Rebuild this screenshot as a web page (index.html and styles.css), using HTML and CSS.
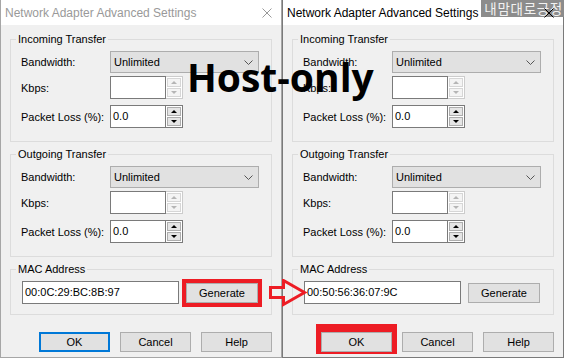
FILE: index.html
```html
<!DOCTYPE html>
<html>
<head>
<meta charset="utf-8">
<link rel="stylesheet" href="styles.css">
</head>
<body>
<div class="screen">
  <div class="dialog inactive">
    <div class="titlebar">
      <span class="title">Network Adapter Advanced Settings</span>
      <svg class="close" width="10" height="10" viewBox="0 0 10 10"><path d="M0.5 0.5L9.5 9.5M9.5 0.5L0.5 9.5"/></svg>
    </div>
    <div class="body">
      <fieldset class="group">
        <legend>Incoming Transfer</legend>
        <div class="rows">
          <span class="lbl">Bandwidth:</span>
          <div class="combo"><span>Unlimited</span><svg width="9" height="5" viewBox="0 0 9 5"><path d="M0.5 0.5L4.5 4.5L8.5 0.5"/></svg></div>
          <span class="lbl">Kbps:</span>
          <div class="spin disabled"><div class="field"></div><div class="btns"><div class="sb"><i class="up"></i></div><div class="sb"><i class="down"></i></div></div></div>
          <span class="lbl">Packet Loss (%):</span>
          <div class="spin"><div class="field">0.0</div><div class="btns"><div class="sb"><i class="up"></i></div><div class="sb"><i class="down"></i></div></div></div>
        </div>
      </fieldset>
      <fieldset class="group">
        <legend>Outgoing Transfer</legend>
        <div class="rows">
          <span class="lbl">Bandwidth:</span>
          <div class="combo"><span>Unlimited</span><svg width="9" height="5" viewBox="0 0 9 5"><path d="M0.5 0.5L4.5 4.5L8.5 0.5"/></svg></div>
          <span class="lbl">Kbps:</span>
          <div class="spin disabled"><div class="field"></div><div class="btns"><div class="sb"><i class="up"></i></div><div class="sb"><i class="down"></i></div></div></div>
          <span class="lbl">Packet Loss (%):</span>
          <div class="spin"><div class="field">0.0</div><div class="btns"><div class="sb"><i class="up"></i></div><div class="sb"><i class="down"></i></div></div></div>
        </div>
      </fieldset>
      <fieldset class="group mac">
        <legend>MAC Address</legend>
        <div class="macrow">
          <div class="macfield">00:0C:29:BC:8B:97</div>
          <div class="btn gen hl">Generate</div>
        </div>
      </fieldset>
      <div class="buttons">
        <div class="btn default">OK</div>
        <div class="btn">Cancel</div>
        <div class="btn">Help</div>
      </div>
    </div>
  </div>
  <div class="dialog active">
    <div class="titlebar">
      <span class="title">Network Adapter Advanced Settings</span>
      <svg class="close" width="10" height="10" viewBox="0 0 10 10"><path d="M0.5 0.5L9.5 9.5M9.5 0.5L0.5 9.5"/></svg>
    </div>
    <div class="body">
      <fieldset class="group">
        <legend>Incoming Transfer</legend>
        <div class="rows">
          <span class="lbl">Bandwidth:</span>
          <div class="combo"><span>Unlimited</span><svg width="9" height="5" viewBox="0 0 9 5"><path d="M0.5 0.5L4.5 4.5L8.5 0.5"/></svg></div>
          <span class="lbl">Kbps:</span>
          <div class="spin disabled"><div class="field"></div><div class="btns"><div class="sb"><i class="up"></i></div><div class="sb"><i class="down"></i></div></div></div>
          <span class="lbl">Packet Loss (%):</span>
          <div class="spin"><div class="field">0.0</div><div class="btns"><div class="sb"><i class="up"></i></div><div class="sb"><i class="down"></i></div></div></div>
        </div>
      </fieldset>
      <fieldset class="group">
        <legend>Outgoing Transfer</legend>
        <div class="rows">
          <span class="lbl">Bandwidth:</span>
          <div class="combo"><span>Unlimited</span><svg width="9" height="5" viewBox="0 0 9 5"><path d="M0.5 0.5L4.5 4.5L8.5 0.5"/></svg></div>
          <span class="lbl">Kbps:</span>
          <div class="spin disabled"><div class="field"></div><div class="btns"><div class="sb"><i class="up"></i></div><div class="sb"><i class="down"></i></div></div></div>
          <span class="lbl">Packet Loss (%):</span>
          <div class="spin"><div class="field">0.0</div><div class="btns"><div class="sb"><i class="up"></i></div><div class="sb"><i class="down"></i></div></div></div>
        </div>
      </fieldset>
      <fieldset class="group mac">
        <legend>MAC Address</legend>
        <div class="macrow">
          <div class="macfield">00:50:56:36:07:9C</div>
          <div class="btn gen">Generate</div>
        </div>
      </fieldset>
      <div class="buttons">
        <div class="btn ok-hl">OK</div>
        <div class="btn">Cancel</div>
        <div class="btn">Help</div>
      </div>
    </div>
  </div>

  <div class="caption">Host-only</div>
  <div class="blogtag">내맘대로긍정</div>
  <svg class="arrow" width="40" height="30" viewBox="0 0 40 30">
    <path d="M1.5 8.5H14.5V1.5L35.5 13.5L14.5 25.5V18.5H1.5Z"/>
  </svg>
</div>
</body>
</html>
```
FILE: styles.css
```css
* { box-sizing: border-box; }
html, body { margin: 0; padding: 0; }
body {
  background: #f0f0f0;
  font-family: "Liberation Sans", Arial, sans-serif;
  font-size: 11px;
  color: #000;
}
.screen {
  position: relative;
  display: flex;
  width: 564px;
  height: 358px;
  overflow: hidden;
}
.dialog {
  width: 282px;
  height: 358px;
  display: flex;
  flex-direction: column;
  background: #f0f0f0;
  border: 1px solid #a6a6a6;
  border-top: none;
}
.dialog.active { border-color: #7a7a7a; }
.titlebar {
  height: 25px;
  flex: none;
  background: #fff;
  display: flex;
  align-items: center;
  justify-content: space-between;
  padding: 0 9px 0 4px;
}
.title { font-size: 12px; line-height: 16px; padding-top: 1px; }
.inactive .title { color: #999; }
.close { position: relative; z-index: 3; fill: none; stroke-width: 1; }
.inactive .close { stroke: #999; }
.active .close { stroke: #000; }
.body {
  flex: 1;
  display: flex;
  flex-direction: column;
  padding: 6px 8px 0 9px;
}
.group {
  margin: 0 0 4px 0;
  width: 262px;
  border: 1px solid #dcdcdc;
  padding: 4px 10px 13px 10px;
  min-inline-size: 0;
}
.group legend {
  padding: 0 2px;
  margin-left: -5px;
  line-height: 16px;
  height: 16px;
}
.rows {
  display: grid;
  grid-template-columns: 89px 150px;
  grid-template-rows: 22px 26px 29px;
  align-items: center;
}
.rows > :nth-child(3), .rows > :nth-child(4) { margin-top: 3px; }
.rows > :nth-child(5), .rows > :nth-child(6) { margin-top: 6px; }
.lbl { line-height: 16px; }
.combo {
  height: 22px;
  width: 149px;
  background: #e1e1e1;
  border: 1px solid #adadad;
  display: flex;
  align-items: center;
  justify-content: space-between;
  padding: 0 5px 0 3px;
}
.combo svg { fill: none; stroke: #555; stroke-width: 1; }
.spin {
  display: flex;
  width: 73px;
  height: 23px;
}
.field {
  width: 56px;
  height: 23px;
  background: #fff;
  border: 1px solid #7a7a7a;
  padding: 0 2px;
  line-height: 20px;
}
.btns {
  width: 17px;
  height: 23px;
  border: 1px solid #7a7a7a;
  border-left: none;
  display: flex;
  flex-direction: column;
  gap: 1px;
  padding: 1px;
  background: #fff;
}
.sb {
  flex: 1;
  border: 1px solid #adadad;
  background: #e5e5e5;
  display: flex;
  align-items: center;
  justify-content: center;
}
.sb i { display: block; width: 0; height: 0; border-left: 3px solid transparent; border-right: 3px solid transparent; }
.sb i.up { border-bottom: 3px solid #000; }
.sb i.down { border-top: 3px solid #000; }
.spin.disabled .btns { border-color: #cccccc; }
.spin.disabled .sb { border-color: #d6d6d6; background: #f4f4f4; }
.spin.disabled .sb i.up { border-bottom-color: #b5b5b5; }
.spin.disabled .sb i.down { border-top-color: #b5b5b5; }

.group.mac { padding: 4px 10px 10px 11px; }
.group.mac legend { margin-left: -6px; }
.macrow { display: flex; align-items: center; gap: 7px; height: 23px; }
.macfield {
  width: 157px;
  height: 23px;
  background: #fff;
  border: 1px solid #7a7a7a;
  padding: 0 2px;
  line-height: 21px;
}
.btn {
  width: 71px;
  height: 20px;
  background: #e1e1e1;
  border: 1px solid #adadad;
  display: flex;
  align-items: center;
  justify-content: center;
  line-height: 16px;
}
.btn.gen { width: 72px; }
.btn.default { border: 2px solid #0078d7; }
.hl { outline: 4px solid #ed1c24; }
.ok-hl { box-shadow: 0 -3px 0 5px #ed1c24; }
.buttons {
  display: flex;
  justify-content: flex-end;
  gap: 10px;
  margin-top: 13px;
  width: 262px;
}

.caption {
  position: absolute;
  left: 187px;
  top: 51px;
  font-family: "Open Sans", "Noto Sans", sans-serif;
  font-weight: 700;
  font-size: 39px;
  line-height: 52px;
  color: #000;
  z-index: 5;
}
.blogtag {
  position: absolute;
  right: 0;
  top: 0;
  height: 17px;
  padding: 0 1px 0 3px;
  background: #8c8c8c;
  color: #f2f2f2;
  font-family: "Noto Sans CJK KR", sans-serif;
  font-size: 13.5px;
  letter-spacing: 0.7px;
  line-height: 17px;
  z-index: 2;
  white-space: nowrap;
}
.arrow {
  position: absolute;
  left: 269px;
  top: 279px;
  fill: none;
  stroke: #ed1c24;
  stroke-width: 3;
  z-index: 5;
}
```
